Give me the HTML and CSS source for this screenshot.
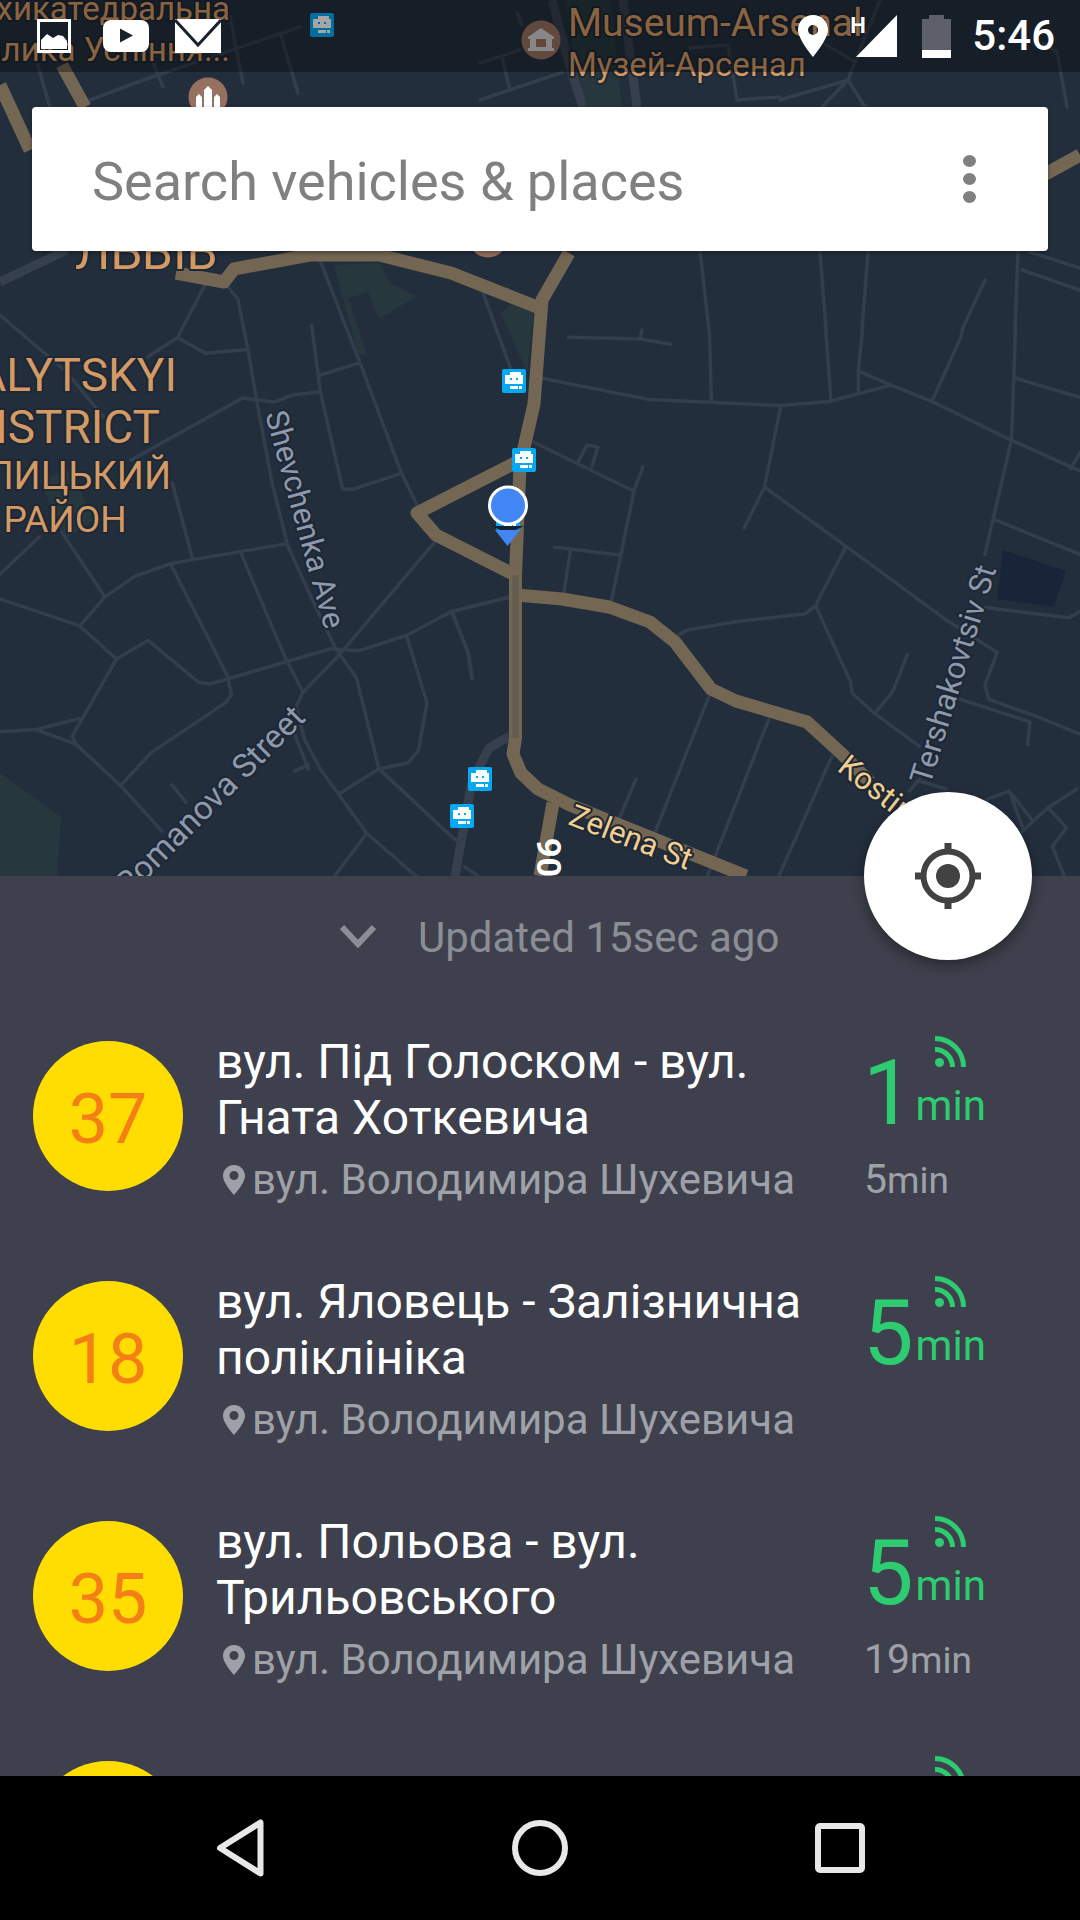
FILE: index.html
```html
<!DOCTYPE html>
<html lang="uk">
<head>
<meta charset="utf-8">
<title>Vehicles</title>
<link rel="stylesheet" href="styles.css">
</head>
<body>
<svg class="defs" width="0" height="0" aria-hidden="true">
  <symbol id="bus" viewBox="0 0 24 24">
    <rect class="bus-tile" width="24" height="24" rx="2"/>
    <path class="bus-body" fill-rule="evenodd" d="M8 3h11v3h2v9H3V6h5zM8 9v2h2V9zM14 9v2h2V9zM8 17h8v3H8zM17 17h3v3h-3z"/>
  </symbol>
  <symbol id="wave" viewBox="0 0 31 31">
    <path class="wave-arc" d="M0 2.5A28.5 28.5 0 0 1 28.5 31M0 13.5A17.5 17.5 0 0 1 17.5 31"/>
    <circle class="wave-dot" cx="4.5" cy="26.5" r="4.5"/>
  </symbol>
  <symbol id="pin" viewBox="0 0 22 30">
    <path class="pin-shape" fill-rule="evenodd" d="M11 0C5 0 0 4.800 0 11c0 7 11 19 11 19s11-12 11-19C22 4.800 17 0 11 0zm0 15a4.500 4.500 0 1 1 0-9 4.500 4.500 0 0 1 0 9z"/>
  </symbol>
</svg>
<div class="app">
  <section class="map">
    <svg class="map-canvas" width="1080" height="876" viewBox="0 0 1080 876">
      <g class="park">
        <path d="M565 0h45l12 107h-40zM334 265L379 263 391 284 417 296 379 319 368 292 348 298 367 354 358 354zM501 313L517 298 534 311 527 372zM0 773l61 44-4 59H0zM40 480l30-10 24 50-30 20z"/>
      </g>
      <path class="water" d="M1003 550l63 21-12 36-57-8z"/>

      <g class="wide">
        <path d="M0 282L67 250"/>
        <path d="M552 0L570 67 583 107"/>
        <path d="M623 0L637 107"/>
        <path d="M510 736L489 748 472 781 455 876"/>
      </g>

      <g class="minor">
        <path d="M90 100L143 80 300 27M230 17L243 83M280 33L298 93M153 63L163 87M37 63L50 107"/>
        <path d="M480 63L520 50M502 57L510 90M480 100L563 72M517 13L522 25M690 48L728 45 737 100 780 97"/>
        <path d="M823 43L855 62 848 80 822 107M880 0L855 62M780 100L848 80 865 107M1043 43L1057 52 1067 107"/>
        <path d="M709 330L700 251M826 330L820 251M862 330L868 251M962 330L985 280M1015 330L1018 251M1022 270L1080 290M1030 252L1080 268"/>
      </g>
      <g class="minor" transform="matrix(.3444 0 0 .4146 0 230)">
        <path d="M600 125L515 260 430 305M0 205L190 340 300 450M515 260L597 297 720 288"/>
        <path d="M650 125L690 165 720 288 745 410 790 610 835 760 900 880 975 1010 1035 1080 1100 1298 1320 1470"/>
        <path d="M930 75L1045 320 1165 585 1215 670M905 230L930 390 995 625 1025 625 1165 587M930 350L1045 320"/>
        <path d="M380 555L705 405 795 415 850 398 930 390M1395 135L1490 350M500 610L560 795M0 830L115 740M180 730L305 885"/>
        <path d="M0 890L232 955 305 885 392 835 495 805 560 795 830 757"/>
        <path d="M232 955L338 1035 430 990 575 1090 610 1095 960 1010 1040 1015 1180 978 1310 920 1480 885"/>
        <path d="M495 805L660 1075 672 1120 655 1140 440 1260 350 1340M700 780L830 1035 880 1115 985 1025 1265 750"/>
        <path d="M338 1035L210 1220 220 1240 350 1340 470 1450M0 1210L105 1205 232 1178M105 1205L220 1240"/>
        <path d="M880 1115L860 1150 885 1230 930 1300 1065 1455 1210 1560M1065 1455L970 1560"/>
        <path d="M1180 978L1240 1140 1215 1255 1185 1285 1100 1300 985 1360M1310 920L1360 1020 1372 1082M855 1215L895 1300M855 1305L895 1290M498 1338L540 1380M1100 1300L1320 1470"/>
      </g>
      <g class="minor" transform="matrix(.40816 0 0 .40816 440 330)">
        <path d="M250 118L510 170 660 177 835 185 955 175 1105 135 1205 175 1400 270 1568 345M660 0L665 177M315 18L490 22 565 35M495 0L490 22M945 0L958 175"/>
        <path d="M1035 0L1025 100 1025 150M1025 100L1105 135M1280 0L1275 20 1205 175M1410 0L1400 270 1335 550M1410 118L1568 165M1568 300L1545 340"/>
        <path d="M835 185L795 385 745 485M795 385L995 530 1240 710 1365 790 1335 870 1345 905 1470 950 1568 990"/>
        <path d="M995 530L920 675 895 695 725 715 605 735 580 750M920 675L1005 860 1010 890 1065 940 1175 1020M1065 940L1110 885 1145 795"/>
        <path d="M1360 465L1568 550M1335 680L1540 705 1568 690M1275 905L1445 960 1440 1015"/>
        <path d="M230 275L475 395 420 665M475 395L497 335M340 320L360 282 387 287 372 335M280 532L445 552M320 540L303 645"/>
        <path d="M170 655L30 690 0 705M30 690L68 790 78 855M660 895L525 1235M805 955L655 1338M960 1045L830 1338M480 1100L440 1195"/>
        <path d="M1175 1100L1150 1130M1175 1105L1240 1125M1430 1225L1395 1130 1340 1150M1425 1230L1490 1170 1560 1125M1490 1170L1535 1220 1500 1265 1530 1338M1395 1130L1450 1200M0 1215L45 1255M60 1315L95 1338"/>
      </g>

      <g class="major">
        <path d="M62 65L85 107M0 85L30 150"/>
        <path d="M176 273L224 282 234 269 310 255 379 255 451 273 537 307"/>
        <path d="M569 253L542 300 534 404 520 465 515.500 575 515.500 738 513 754 521 773 538 789 570 805 746 876"/>
        <path d="M515 463L417 513 436 535 513 574"/>
        <path d="M517 595L562 599 609 607 650 622 675 642 711 689 736 701 807 722 842 754 870 782"/>
        <path d="M553 803L540 876"/>
        <path d="M1040 177L1080 155"/>
      </g>
      <path class="major-core" d="M515.500 575V738"/>

      <g class="poi">
        <circle cx="541" cy="40" r="19.500"/>
        <circle cx="208" cy="97" r="19.500"/>
        <circle cx="488" cy="238" r="19.500"/>
      </g>
      <path class="poi-glyph" fill-rule="evenodd" d="M541 28l13 9v2h-2v9h2v3h-26v-3h2v-9h-2v-2zM536 39v8h10v-8z"/>
      <path class="poi-glyph-light" d="M196 107v-10l3-3 3 3v10zM204 107V90l4-4 4 4v17zM214 107v-10l3-3 3 3v10z"/>

      <text class="lbl lbl-a lbl-top" x="230" y="20" text-anchor="end">Архикатедральна</text>
      <text class="lbl lbl-a lbl-top" x="230" y="61" text-anchor="end">Базилика Успіння...</text>
      <text class="lbl lbl-a lbl-en" x="568" y="36">Museum-Arsenal</text>
      <text class="lbl lbl-a lbl-ua" x="568" y="76">Музей-Арсенал</text>
      <text class="lbl lbl-a lbl-city" x="75" y="269">ЛЬВІВ</text>
      <text class="lbl lbl-a lbl-dist" x="177" y="391" text-anchor="end">HALYTSKYI</text>
      <text class="lbl lbl-a lbl-dist" x="160" y="443" text-anchor="end">DISTRICT</text>
      <text class="lbl lbl-a lbl-distua" x="171" y="489" text-anchor="end">ГАЛИЦЬКИЙ</text>
      <text class="lbl lbl-a lbl-distua2" x="65" y="532" text-anchor="middle">РАЙОН</text>

      <text class="lbl lbl-road" transform="translate(265 414) rotate(74.5)">Shevchenka Ave</text>
      <text class="lbl lbl-road lbl-road-lg" transform="translate(307 719) rotate(-45)" text-anchor="end">Romanova Street</text>
      <text class="lbl lbl-road" transform="translate(930 786) rotate(-73)">Tershakovtsiv St</text>
      <text class="lbl lbl-gold" transform="translate(567 824) rotate(21)">Zelena St</text>
      <text class="lbl lbl-gold" transform="translate(836 770) rotate(38)">Kostiushka St</text>
      <text class="lbl lbl-num" transform="translate(561 838) rotate(-90)" text-anchor="end">М06</text>

      <use href="#bus" x="310" y="13" width="24" height="24"/>
      <use href="#bus" x="502" y="369" width="24" height="24"/>
      <use href="#bus" x="512" y="448" width="24" height="24"/>
      <use href="#bus" x="468" y="767" width="24" height="24"/>
      <use href="#bus" x="450" y="804" width="24" height="24"/>
      <use href="#bus" x="496" y="506" width="24" height="24"/>

      <path class="me-shadow" d="M492 526h32l-16 8z"/>
      <path class="me-fill" d="M495 530h25l-12.500 16z"/>
      <circle class="me-dot" cx="508" cy="505.500" r="18.500"/>
    </svg>

    <header class="status">
      <div class="status-group">
        <svg class="st-img" width="34" height="34" viewBox="0 0 34 34">
          <rect class="st-frame" x="1.500" y="1.500" width="31" height="31"/>
          <path class="st-fill" d="M4 30V21l6-6 6 4 5-3 5 1 4 5v8z"/>
        </svg>
        <svg class="st-yt" width="46" height="32" viewBox="0 0 46 32">
          <rect class="st-fill" width="46" height="32" rx="8"/>
          <path class="st-dark" d="M17 8.500v14l13-7z"/>
        </svg>
        <svg class="st-mail" width="46" height="34" viewBox="0 0 46 34">
          <rect class="st-fill" width="46" height="34"/>
          <path class="st-vee" d="M0 1l23 25L46 1"/>
        </svg>
      </div>
      <div class="status-group status-right">
        <svg class="st-pin" width="30" height="42" viewBox="0 0 30 42">
          <path class="st-fill" fill-rule="evenodd" d="M15 0C6.500 0 0 6.500 0 15c0 9 15 27 15 27s15-18 15-27C30 6.500 23.500 0 15 0zm0 20a5 5 0 1 1 0-10 5 5 0 0 1 0 10z"/>
        </svg>
        <div class="st-signal">
          <svg width="41" height="42" viewBox="0 0 41 42"><path class="st-fill" d="M0 42L41 0v42z"/></svg>
          <span class="st-h">H</span>
        </div>
        <svg class="st-batt" width="29" height="43" viewBox="0 0 29 43">
          <path class="st-batt-empty" d="M7 0h15v4h7v31H0V4h7z"/>
          <rect class="st-fill" y="35" width="29" height="8"/>
        </svg>
        <span class="st-time">5:46</span>
      </div>
    </header>

    <div class="search">
      <span class="search-text">Search vehicles &amp; places</span>
      <div class="dots"><i></i><i></i><i></i></div>
    </div>
  </section>

  <button class="fab" type="button" aria-label="My location">
    <svg width="66" height="66" viewBox="0 0 66 66">
      <circle class="fab-ring" cx="33" cy="33" r="24.500"/>
      <circle class="fab-dot" cx="33" cy="33" r="12"/>
      <path class="fab-tick" d="M33 0v8M33 58v8M0 33h8M58 33h8"/>
    </svg>
  </button>

  <section class="panel">
    <div class="updated">
      <svg class="chev" width="36" height="24" viewBox="0 0 36 24"><path d="M2 3l16 17L34 3"/></svg>
      <span>Updated 15sec ago</span>
    </div>

    <article class="row">
      <div class="badge">37</div>
      <div class="info">
        <h2 class="title">вул. Під Голоском - вул. Гната Хоткевича</h2>
        <p class="stop"><svg class="stop-pin" width="22" height="30"><use href="#pin"/></svg>вул. Володимира Шухевича</p>
      </div>
      <div class="eta">
        <svg class="eta-wave" width="31" height="31"><use href="#wave"/></svg>
        <div class="eta-main"><b>1</b><span>min</span></div>
        <div class="eta-next"><b>5</b>min</div>
      </div>
    </article>

    <article class="row">
      <div class="badge">18</div>
      <div class="info">
        <h2 class="title">вул. Яловець - Залізнична поліклініка</h2>
        <p class="stop"><svg class="stop-pin" width="22" height="30"><use href="#pin"/></svg>вул. Володимира Шухевича</p>
      </div>
      <div class="eta">
        <svg class="eta-wave" width="31" height="31"><use href="#wave"/></svg>
        <div class="eta-main"><b>5</b><span>min</span></div>
      </div>
    </article>

    <article class="row">
      <div class="badge">35</div>
      <div class="info">
        <h2 class="title">вул. Польова - вул. Трильовського</h2>
        <p class="stop"><svg class="stop-pin" width="22" height="30"><use href="#pin"/></svg>вул. Володимира Шухевича</p>
      </div>
      <div class="eta">
        <svg class="eta-wave" width="31" height="31"><use href="#wave"/></svg>
        <div class="eta-main"><b>5</b><span>min</span></div>
        <div class="eta-next"><b>19</b>min</div>
      </div>
    </article>

    <article class="row">
      <div class="badge"></div>
      <div class="info"></div>
      <div class="eta">
        <svg class="eta-wave" width="31" height="31"><use href="#wave"/></svg>
      </div>
    </article>
  </section>

  <nav class="nav">
    <div class="nav-slot">
      <svg width="48" height="58" viewBox="0 0 48 58"><path class="nav-icon" d="M44.500 3.500v51L4 29z"/></svg>
    </div>
    <div class="nav-slot">
      <svg width="56" height="56" viewBox="0 0 56 56"><circle class="nav-icon" cx="28" cy="28" r="25"/></svg>
    </div>
    <div class="nav-slot">
      <svg width="50" height="50" viewBox="0 0 50 50"><rect class="nav-icon" x="3" y="3" width="44" height="44" rx="2"/></svg>
    </div>
  </nav>
</div>
</body>
</html>
```

FILE: styles.css
```css
* { box-sizing: border-box; }

html, body {
  margin: 0;
  padding: 0;
  background: #000;
}

body {
  font-family: Roboto, "Noto Sans", sans-serif;
}

.defs {
  position: absolute;
}

.app {
  position: relative;
  width: 1080px;
  height: 1920px;
  display: flex;
  flex-direction: column;
  overflow: hidden;
}

/* ---------- map ---------- */
.map {
  position: relative;
  flex: 0 0 876px;
  padding: 107px 32px 0;
  background: #232e3d;
  overflow: hidden;
}

.map-canvas {
  position: absolute;
  left: 0;
  top: 0;
  display: block;
}

.park path { fill: #26383e; }
.water { fill: #182539; }

.minor path {
  fill: none;
  stroke: #323e4c;
  stroke-width: 3.5px;
  stroke-linejoin: round;
  stroke-linecap: round;
  vector-effect: non-scaling-stroke;
}

.wide path {
  fill: none;
  stroke: #353f4d;
  stroke-width: 9px;
  stroke-linejoin: round;
}

.major path {
  fill: none;
  stroke: #736652;
  stroke-width: 13px;
  stroke-linejoin: round;
}

.major-core {
  fill: none;
  stroke: #635c50;
  stroke-width: 6px;
}

.poi circle { fill: #97705f; }
.poi-glyph { fill: #d0cfcf; }
.poi-glyph-light { fill: #fff; }

.lbl {
  font-family: Roboto, sans-serif;
  paint-order: stroke;
  stroke: #1d2735;
  stroke-width: 4px;
  stroke-linejoin: round;
}

.lbl-a { fill: #d49a63; }
.lbl-top { font-size: 33px; }
.lbl-en { font-size: 39px; }
.lbl-ua { font-size: 33px; }
.lbl-city { font-size: 50px; }
.lbl-dist { font-size: 46px; }
.lbl-distua { font-size: 38px; }
.lbl-distua2 { font-size: 37px; }
.lbl-road { fill: #8e9aab; font-size: 31px; }
.lbl-road-lg { font-size: 33px; }
.lbl-gold { fill: #f1cf91; font-size: 31px; }
.lbl-num { fill: #fff; font-size: 34px; font-weight: 700; stroke-width: 0; }

.bus-tile { fill: #03a9f4; }
.bus-body { fill: #fff; }

.me-shadow { fill: #1a2230; }
.me-fill { fill: #4285f4; }
.me-dot { fill: #4285f4; stroke: #fff; stroke-width: 3px; }

/* ---------- status bar ---------- */
.status {
  position: absolute;
  left: 0;
  top: 0;
  width: 100%;
  height: 72px;
  padding: 0 25px 0 37px;
  display: flex;
  align-items: center;
  justify-content: space-between;
  background: rgba(0, 0, 0, .35);
}

.status-group {
  display: flex;
  align-items: center;
}

.status-group > svg { display: block; }

.st-yt { margin-left: 32px; }
.st-mail { margin-left: 26px; }
.st-signal {
  position: relative;
  margin-left: 28px;
  height: 42px;
}
.st-signal svg { display: block; }
.st-batt { margin-left: 25px; }

.st-fill { fill: #fff; }
.st-dark { fill: #1a222e; }
.st-frame { fill: none; stroke: #fff; stroke-width: 3px; }
.st-vee { fill: none; stroke: #1a222e; stroke-width: 3px; }
.st-batt-empty { fill: #5d606a; }

.st-h {
  position: absolute;
  left: -6px;
  top: 0;
  font-size: 22px;
  line-height: 22px;
  font-weight: 700;
  color: #fff;
}

.st-time {
  margin-left: 21px;
  font-size: 42px;
  font-weight: 500;
  line-height: 48px;
  color: #fff;
}

/* ---------- search ---------- */
.search {
  position: relative;
  height: 144px;
  padding: 0 72px 0 60px;
  display: flex;
  align-items: center;
  justify-content: space-between;
  background: #fff;
  border-radius: 4px;
  box-shadow: 0 2px 4px rgba(0, 0, 0, .35);
}

.search-text {
  padding-top: 4px;
  font-size: 54px;
  color: #808080;
}

.dots {
  display: flex;
  flex-direction: column;
  gap: 6px;
}

.dots i {
  display: block;
  width: 13px;
  height: 12px;
  border-radius: 50%;
  background: #808080;
}

/* ---------- locate button ---------- */
.fab {
  position: absolute;
  left: 864px;
  top: 792px;
  z-index: 2;
  width: 168px;
  height: 168px;
  padding: 0;
  border: 0;
  border-radius: 50%;
  background: #fff;
  display: flex;
  align-items: center;
  justify-content: center;
  box-shadow: 0 5px 14px rgba(0, 0, 0, .4);
}

.fab-ring { fill: none; stroke: #424242; stroke-width: 6px; }
.fab-dot { fill: #424242; }
.fab-tick { fill: none; stroke: #424242; stroke-width: 7px; }

/* ---------- panel ---------- */
.panel {
  flex: 1;
  min-height: 0;
  overflow: hidden;
  background: #3e414d;
}

.updated {
  height: 120px;
  padding-left: 340px;
  display: flex;
  align-items: center;
  gap: 42px;
  font-size: 42px;
  color: #8c8e96;
}

.updated span { padding-top: 3px; }

.chev path {
  fill: none;
  stroke: #8c8e96;
  stroke-width: 6px;
}

.row {
  height: 240px;
  padding: 45px 0 0 33px;
  display: flex;
  align-items: flex-start;
}

.badge {
  flex: 0 0 150px;
  height: 150px;
  padding-top: 6px;
  border-radius: 50%;
  background: #ffdd00;
  display: flex;
  align-items: center;
  justify-content: center;
  font-size: 70px;
  color: #f57f17;
}

.info {
  flex: 0 0 647px;
  margin: -7px 0 0 33px;
}

.title {
  width: 620px;
  margin: 0;
  font-size: 48px;
  font-weight: 400;
  line-height: 56px;
  color: #fff;
}

.stop {
  margin: 9px 0 0;
  display: flex;
  align-items: center;
  white-space: nowrap;
  font-size: 42px;
  line-height: 50px;
  color: #9fa1a8;
}

.stop-pin {
  flex: none;
  margin: 0 7px 0 7px;
}

.pin-shape { fill: #9fa1a8; }

.eta {
  position: relative;
  margin-top: 8px;
  flex: 1;
}

.eta-wave {
  position: absolute;
  left: 72px;
  top: -13px;
}

.wave-arc { fill: none; stroke: #2ecc71; stroke-width: 5px; }
.wave-dot { fill: #2ecc71; }

.eta-main {
  height: 90px;
  line-height: 90px;
  color: #2ecc71;
  white-space: nowrap;
}

.eta-main b {
  font-size: 90px;
  font-weight: 400;
}

.eta-main span {
  margin-left: 2px;
  font-size: 42px;
  vertical-align: 4px;
}

.eta-next {
  margin-top: 15px;
  padding-left: 1px;
  font-size: 37px;
  line-height: 50px;
  color: #9fa1a8;
  white-space: nowrap;
}

.eta-next b {
  font-size: 41px;
  font-weight: 400;
}

/* ---------- nav bar ---------- */
.nav {
  flex: 0 0 144px;
  padding: 0 90px;
  display: flex;
  background: #000;
}

.nav-slot {
  flex: 1;
  display: flex;
  align-items: center;
  justify-content: center;
}

.nav-icon {
  fill: none;
  stroke: #e8e8e8;
  stroke-width: 6px;
  stroke-linejoin: round;
}
```
